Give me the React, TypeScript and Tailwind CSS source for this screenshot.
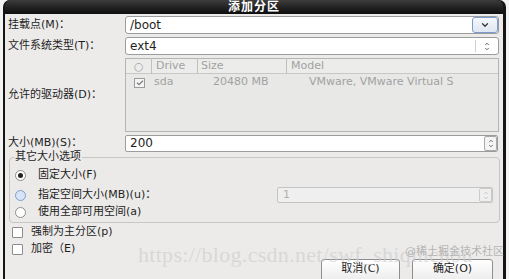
import { Check, ChevronDown, ChevronUp } from 'lucide-react';

const FONT = "font-['DejaVu_Sans','Noto_Sans_CJK_SC',sans-serif]";

function UpDown({ className = '' }: { className?: string }) {
  return (
    <span className={`flex flex-col items-center leading-none ${className}`}>
      <ChevronUp className="w-[8px] h-[6px] -mb-[1px]" strokeWidth={3} />
      <ChevronDown className="w-[8px] h-[6px]" strokeWidth={3} />
    </span>
  );
}

function Radio({ state }: { state: 'on' | 'hover' | 'off' }) {
  if (state === 'on') {
    return (
      <span className="w-[11px] h-[11px] rounded-full border border-[#8c8c8c] bg-white flex items-center justify-center">
        <span className="w-[5px] h-[5px] rounded-full bg-[#222]" />
      </span>
    );
  }
  if (state === 'hover') {
    return <span className="w-[11px] h-[11px] rounded-full border border-[#7f9fcc] bg-[#d7e4f5]" />;
  }
  return <span className="w-[11px] h-[11px] rounded-full border border-[#8c8c8c] bg-white" />;
}

function Box() {
  return <span className="w-[11px] h-[11px] border border-[#8c8c8c] bg-white rounded-[1px]" />;
}

export default function App() {
  return (
    <div className={`relative w-[509px] h-[279px] overflow-hidden bg-[#f3f3f3] ${FONT} text-[11px] text-[#1e1e1e]`}>
      {/* window frame */}
      <div className="ml-[3px] w-[503px] h-full flex flex-col bg-[#111] rounded-t-[7px] border-l-2 border-r-[3px] border-[#151515]">
        <div className="h-[14px] flex items-center justify-center bg-gradient-to-b from-[#3c3c3c] to-[#0e0e0e] text-white font-bold text-[12px] tracking-[1px] rounded-t-[6px]">
          添加分区
        </div>

        <div className="flex-1 bg-[#ecebea] flex flex-col">
          {/* mount point */}
          <div className="mt-[2px] grid grid-cols-[120px_1fr] pr-[4px] items-center">
            <span className="pl-[3px]">挂载点(M)：</span>
            <div className="h-[18px] flex bg-white border border-[#9c9c9c] rounded-[3px] overflow-hidden">
              <span className="flex-1 pl-[4px] leading-[16px] text-[12px]">/boot</span>
              <span className="w-[26px] flex items-center justify-center border border-[#7b9ccb] rounded-[3px] bg-gradient-to-b from-[#f4f7fb] to-[#dfe7f2]">
                <ChevronDown className="w-[10px] h-[10px] text-[#333]" strokeWidth={3} />
              </span>
            </div>
          </div>

          {/* fs type */}
          <div className="mt-[3px] grid grid-cols-[120px_1fr] pr-[4px] items-center">
            <span className="pl-[3px]">文件系统类型(T)：</span>
            <div className="h-[18px] flex bg-white border border-[#9c9c9c] rounded-[3px]">
              <span className="flex-1 pl-[4px] leading-[16px] text-[12px]">ext4</span>
              <span className="w-[23px] flex items-center justify-center border-l border-[#d0d0d0] my-[2px] text-[#333]">
                <UpDown />
              </span>
            </div>
          </div>

          {/* drives */}
          <div className="mt-[3px] grid grid-cols-[120px_1fr] pr-[4px] items-center">
            <span className="pl-[3px]">允许的驱动器(D)：</span>
            <div className="h-[74px] border border-[#b4b4b4] bg-[#e8e8e7] text-[#a2a2a2] text-[11px]">
              <div className="h-[15px] flex items-center border-b border-[#c8c8c8] bg-[#ececeb]">
                <span className="w-[25px] pl-[8px] leading-none">○</span>
                <span className="w-[46px] pl-[4px] border-l border-[#c0c0c0]">Drive</span>
                <span className="w-[89px] pl-[3px] border-l border-[#c0c0c0]">Size</span>
                <span className="flex-1 pl-[4px] border-l border-[#c0c0c0]">Model</span>
              </div>
              <div className="h-[17px] flex items-center">
                <span className="w-[28px] pl-[8px] flex">
                  <span className="w-[11px] h-[10px] border border-[#9c9c9c] bg-[#f4f4f4] flex items-center justify-center">
                    <Check className="w-[8px] h-[8px] text-[#777]" strokeWidth={3.5} />
                  </span>
                </span>
                <span className="w-[59px]">sda</span>
                <span className="w-[96px]">20480 MB</span>
                <span className="flex-1 whitespace-nowrap overflow-hidden">VMware, VMware Virtual S</span>
              </div>
            </div>
          </div>

          {/* size */}
          <div className="mt-[3px] grid grid-cols-[120px_1fr] pr-[5px] items-center">
            <span className="pl-[3px]">大小(MB)(S)：</span>
            <div className="h-[17px] flex bg-white border border-[#9c9c9c] rounded-[2px]">
              <span className="flex-1 pl-[4px] leading-[15px] text-[12px]">200</span>
              <span className="w-[13px] flex items-center justify-center border border-[#a8a8a8] rounded-[2px] bg-[#f4f4f4] text-[#444]">
                <UpDown />
              </span>
            </div>
          </div>

          {/* other size options */}
          <fieldset className="-mt-[1px] ml-[4px] mr-[3px] border border-[#c6c6c6] rounded-[4px] px-[5px] pb-[2px] bg-[#ebeae9]">
            <legend className="ml-[-1px] px-[1px] leading-[12px] bg-[#ecebea]">其它大小选项</legend>
            <div className="mt-[4px] h-[16px] flex items-center gap-[12px]">
              <Radio state="on" />
              <span>固定大小(F)</span>
            </div>
            <div className="mt-[4px] h-[16px] flex items-center gap-[12px]">
              <Radio state="hover" />
              <span className="flex-1">指定空间大小(MB)(u)：</span>
              <div className="w-[216px] h-[16px] mr-[1px] flex bg-[#efefef] border border-[#c4c4c4] rounded-[2px] text-[#b0b0b0]">
                <span className="flex-1 pl-[5px] leading-[14px]">1</span>
                <span className="w-[13px] flex items-center justify-center border border-[#cbcbcb] rounded-[2px] text-[#b8b8b8]">
                  <UpDown />
                </span>
              </div>
            </div>
            <div className="mt-[1px] h-[16px] flex items-center gap-[12px]">
              <Radio state="off" />
              <span>使用全部可用空间(a)</span>
            </div>
          </fieldset>

          {/* checkboxes */}
          <div className="mt-[1px] pl-[7px] h-[16px] flex items-center gap-[8px]">
            <Box />
            <span>强制为主分区(p)</span>
          </div>
          <div className="mt-[1px] pl-[7px] h-[16px] flex items-center gap-[8px]">
            <Box />
            <span>加密（E)</span>
          </div>

          {/* buttons */}
          <div className="mt-[2px] pr-[10px] flex justify-end gap-[12px]">
            <button className="w-[79px] h-[26px] border border-[#8e8e8e] rounded-[3px] bg-gradient-to-b from-white to-[#e9e9e9] pb-[6px]">
              取消(C)
            </button>
            <button className="w-[81px] h-[26px] border border-[#8e8e8e] rounded-[3px] bg-gradient-to-b from-white to-[#e9e9e9] pb-[6px]">
              确定(O)
            </button>
          </div>
        </div>
      </div>

      {/* watermark overlay */}
      <span className="pointer-events-none absolute left-[138px] top-[244px] font-['Liberation_Serif',serif] text-[22px] leading-none text-[#cfcfcf]/70 whitespace-nowrap tracking-[0.3px]">
        https://blog.csdn.net/swf_shiqinchou
      </span>
      <span className="pointer-events-none absolute left-[405px] top-[246px] text-[11px] leading-none text-[#9a9a9a]/70 whitespace-nowrap">
        @稀土掘金技术社区
      </span>
    </div>
  );
}
